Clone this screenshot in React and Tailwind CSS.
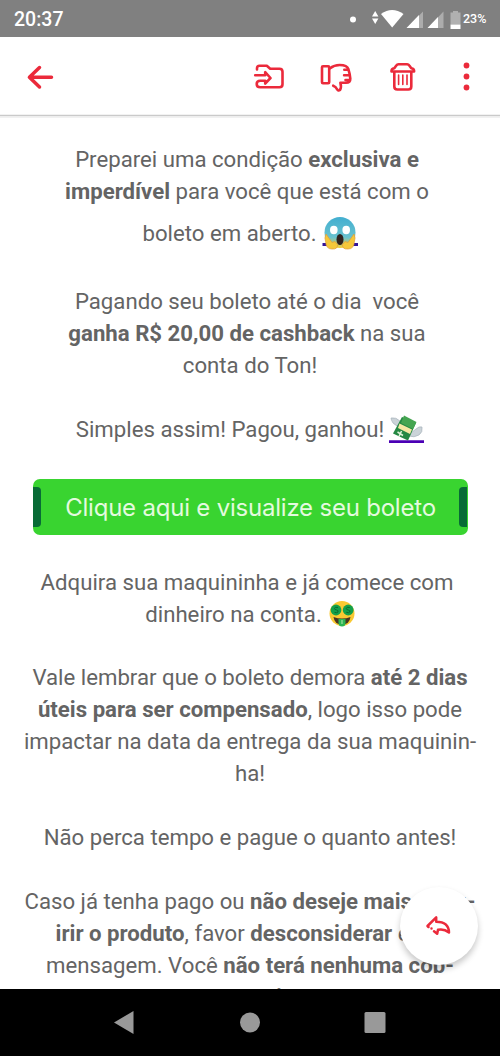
import React from "react";

const B = ({ children }) => <b className="font-bold">{children}</b>;

function Line({ children, className = "" }) {
  return (
    <div className={`flex h-8 shrink-0 items-center justify-center whitespace-pre ${className}`}>
      <span>{children}</span>
    </div>
  );
}

function StatusBar() {
  return (
    <div className="flex h-[37px] shrink-0 items-center bg-[#808080] pl-[14px] pt-[2px] text-white">
      <span className="w-[336px] text-[19.5px] font-medium leading-none">20:37</span>
      <svg className="h-[37px] w-[113px] shrink-0" viewBox="350 0 113 37" fill="#fff">
        <circle cx="353" cy="18.500" r="3" />
        <path d="M372 15.500 375.200 10l3.200 5.500zM372 17.500h6.400l-3.200 5.500z" />
        <path d="M381 13q11-8 22.500 0L392.200 26.500z" />
        <path d="M407 27L423 10.500v16.500z" opacity=".35" />
        <path d="M406.500 27 419 14v13z" />
        <path d="M428 27 443.500 10.500v16.500z" opacity=".35" />
        <path d="M427.500 27 438 16v11z" />
        <path d="M450.500 11.500h2.500V10h5v1.500h2.500v12h-10z" opacity=".38" />
        <path d="M450.500 23.500h10V28h-10z" />
      </svg>
      <span className="text-[12.500px] font-medium leading-none">23%</span>
    </div>
  );
}

function Toolbar() {
  return (
    <svg
      className="block h-[81px] w-[500px] shrink-0"
      viewBox="0 37 500 81"
      fill="none"
      stroke="#eb2a3b"
      strokeWidth="2.600"
      strokeLinecap="round"
      strokeLinejoin="round"
    >
      <path d="M0 115.500h500" stroke="#cacaca" strokeWidth="1.500" strokeLinecap="butt" />
      <path d="M0 117h500" stroke="#ececec" strokeWidth="1.500" strokeLinecap="butt" />
      <path d="M51.500 77.300H30M39.500 67.500 29.400 77.300 39.500 87" strokeWidth="3.500" />
      <path d="M257 69.500v-1.200q0-2.600 2.600-2.600h7.200l3.400 3h9.300q3 0 3 3v12.500q0 3-3 3h-19.300q-3.500 0-3.500-3.200 0-3.200 3.500-3.200h5v2.800l5.300-5.600-5.300-5.900v3.100h-10" />
      <rect x="322" y="66.300" width="7.200" height="17" rx="1" />
      <path d="M329.700 68.500q4.500-3.500 10-3.500 7.300 0 8.600 3.800l1.300 5 .7 4.800q.2 4.200-4.300 4.200h-5.600q1.300 4.500-.4 7.200-1.800 1.400-3-.8-1-2.500-3.800-3.500M348.300 69.800h-4M349.500 75.200h-5.400M349.500 80h-4" />
      <path d="M391.500 71.500q-.3-2.800 2.800-3.300l2-2.700q.8-1.200 2.200-1.200h8.600q1.400 0 2.200 1.200l2 2.700q3.100.5 2.800 3.300zM394.300 72.500v14q0 3 3 3h11q3 0 3-3v-14" />
      <path d="M398.600 75v9.500M402.800 75v9.500M407 75v9.500" strokeWidth="1.600" />
      <g fill="#eb2a3b" stroke="none">
        <circle cx="466.500" cy="65.500" r="2.900" />
        <circle cx="466.500" cy="76.500" r="2.900" />
        <circle cx="466.500" cy="87.500" r="2.900" />
      </g>
    </svg>
  );
}

function ScreamEmoji() {
  return (
    <svg className="h-[34px] w-[36px] shrink-0" viewBox="322 216 36 34">
      <path d="M322.500 244.500h35.500" stroke="#32149a" strokeWidth="2.800" />
      <defs>
        <linearGradient id="face" x1="0" y1="0" x2="0" y2="1">
          <stop offset="0" stopColor="#42aed0" />
          <stop offset=".65" stopColor="#68c2cf" />
          <stop offset="1" stopColor="#f5ce36" />
        </linearGradient>
      </defs>
      <circle cx="340" cy="232.500" r="15.500" fill="url(#face)" />
      <ellipse cx="333.800" cy="230" rx="3.800" ry="4.200" fill="#fff" />
      <ellipse cx="346.200" cy="230" rx="3.800" ry="4.200" fill="#fff" />
      <ellipse cx="340" cy="239.500" rx="3.500" ry="5.500" fill="#30221d" />
      <path d="M326 234q-2 4-.3 8 .3 7 6.300 7 6 .4 5.500-4.500l-2.500-3-3 1zM354 234q2 4 .3 8-.3 7-6.300 7-6 .4-5.500-4.500l2.500-3 3 1z" fill="#f5c83a" stroke="#e39c37" strokeWidth=".7" />
    </svg>
  );
}

function MoneyEmoji() {
  return (
    <svg className="h-[28px] w-[35px] shrink-0" viewBox="390 413 35 28">
      <path d="M390 439.600h35" stroke="#4b00b5" strokeWidth="2.600" />
      <path d="M404 425q-7 0-10-4-2-3-2-5 5-1 9 3zM410 431q4-1 7-4 3-3 6-2 1 5-3 8-5 3-10 1z" fill="#cbd3d8" stroke="#a8b3bb" strokeWidth=".7" />
      <path d="m403 415 14 6-8 17.500-15-7z" fill="#258843" />
      <path d="m405 413.500 12.500 6.500-3.500 7-12-6z" fill="#45a551" />
      <path d="m400.500 421.500 12.500 6-2 4.500-12-6z" fill="#f5e7a3" />
      <path d="m398.500 430 5.500 3.500M402.500 429l-2.500 5.500" stroke="#e1f4d9" strokeWidth="1.500" />
    </svg>
  );
}

function RichEmoji() {
  return (
    <svg className="h-[26px] w-[26px] shrink-0" viewBox="328 602 26 26">
      <circle cx="341" cy="614.500" r="12.500" fill="#f9c932" />
      <path d="M332.500 618q8.500 3 17 0-1 7.500-8.500 7.500t-8.500-7.500" fill="#49351f" />
      <path d="M337.500 620h7v4q0 3.500-3.500 3.500t-3.500-3.500z" fill="#2ab553" />
      <circle cx="335" cy="611" r="5.400" fill="#12a04a" />
      <circle cx="347.200" cy="611" r="5.400" fill="#12a04a" />
      <path d="M337 608.500q-3.500-1-3.500 1 0 1.200 2 1.500t1.500 2q-1 1.300-3.500.3M348.800 608.500q-3.500-1-3.500 1 0 1.200 2 1.500t1.500 2q-1 1.300-3.500.3" fill="none" stroke="#0a6b31" strokeWidth="1" />
      <path d="M341 621v4" stroke="#b8e6ae" />
    </svg>
  );
}

function PayButton() {
  return (
    <div className="mx-auto mt-[34px] flex h-[56px] w-[435px] shrink-0 items-center justify-between overflow-hidden rounded-[7px] bg-[#39d430]">
      <span className="h-[40px] w-[8px] rounded-r-[4px] bg-[#086b36]" />
      <span className="whitespace-nowrap pl-px pt-px font-['Inter'] text-[24px] font-normal tracking-[-0.21px] text-[#e4fadf]">
        Clique aqui e visualize seu boleto
      </span>
      <span className="h-[40px] w-[8px] rounded-l-[4px] bg-[#086b36]" />
    </div>
  );
}

export default function App() {
  return (
    <div className="relative flex h-[1056px] w-[500px] flex-col overflow-hidden bg-white font-['Roboto',sans-serif]">
      <StatusBar />
      <Toolbar />
      <main className="flex h-[871px] shrink-0 flex-col overflow-hidden pt-[25px] text-[22.2px] leading-8 text-[#646464]">
        <Line className="pr-[6px]">Preparei uma condição <B>exclusiva e</B></Line>
        <Line className="pr-[6px]"><B>imperdível</B> para você que está com o</Line>
        <div className="mt-[10px] flex h-8 shrink-0 items-center justify-center gap-[5px]">
          <span>boleto em aberto.</span><ScreamEmoji />
        </div>
        <Line className="mt-9 pr-[6px]">Pagando seu boleto até o dia  você</Line>
        <Line className="pr-[6px]"><B>ganha R$ 20,00 de cashback</B> na sua</Line>
        <Line>conta do Ton!</Line>
        <div className="mt-8 flex h-8 shrink-0 items-center justify-center gap-[5px]">
          <span>Simples assim! Pagou, ganhou!</span><MoneyEmoji />
        </div>
        <PayButton />
        <Line className="mt-[31px] pr-[6px]">Adquira sua maquininha e já comece com</Line>
        <div className="flex h-8 shrink-0 items-center justify-center gap-[7px]">
          <span>dinheiro na conta.</span><RichEmoji />
        </div>
        <Line className="mt-[31px]">Vale lembrar que o boleto demora <B>até 2 dias</B></Line>
        <Line><B>úteis para ser compensado</B>, logo isso pode</Line>
        <Line>impactar na data da entrega da sua maquinin-</Line>
        <Line>ha!</Line>
        <Line className="mt-8">Não perca tempo e pague o quanto antes!</Line>
        <Line className="mt-8">Caso já tenha pago ou <B>não deseje mais adqu-</B></Line>
        <Line><B>irir o produto</B>, favor <B>desconsiderar</B> essa</Line>
        <Line>mensagem. Você <B>não terá nenhuma cob-</B></Line>
        <Line><B>rança por isso.</B></Line>
      </main>
      <nav className="flex h-[67px] shrink-0 items-center bg-black">
        <svg className="h-[67px] w-[500px]" viewBox="0 989 500 67" fill="#999">
          <path d="m114 1022.500 19.500-11.500v23z" />
          <circle cx="250" cy="1022.500" r="10" />
          <rect x="364.500" y="1012" width="21" height="21" rx="1.500" />
        </svg>
      </nav>
      <button aria-label="Responder" className="absolute left-[400px] top-[887px] flex h-[78px] w-[78px] items-center justify-center rounded-full bg-white shadow-[0_4px_6px_rgba(0,0,0,0.22)]">
        <svg className="h-[24px] w-[28px]" viewBox="425 914 28 24" fill="none" stroke="#eb2a3b" strokeWidth="2.500" strokeLinecap="round" strokeLinejoin="round">
          <path d="m428.500 927-1-1 8.700-8.700v4.500q12.500 0 12.800 10.700-5-4-11-2.700l-.8 4-3.200-2.600M431.500 928.500v.1" />
        </svg>
      </button>
    </div>
  );
}
